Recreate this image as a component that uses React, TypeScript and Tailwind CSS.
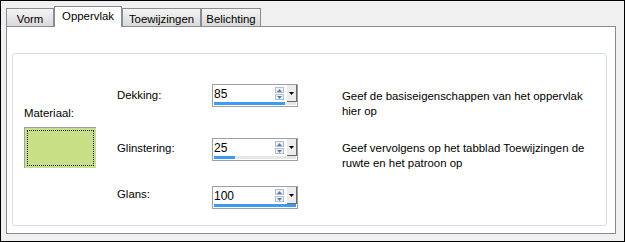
import React from 'react';

const tabs = [
  { label: 'Vorm', width: 'w-[48px]' },
  { label: 'Oppervlak', width: 'w-[68px]', active: true },
  { label: 'Toewijzingen', width: 'w-[79px]' },
  { label: 'Belichting', width: 'w-[60px]' },
];

function SpinArrow({ up }: { up?: boolean }) {
  return (
    <div className="flex h-[6px] w-[9px] items-center justify-center border border-[#b3bfd0] bg-[#eef2f8]">
      <svg width="5" height="3" viewBox="0 0 5 3">
        {up ? (
          <polygon points="0,3 5,3 2.5,0" fill="#5b78ad" />
        ) : (
          <polygon points="0,0 5,0 2.5,3" fill="#5b78ad" />
        )}
      </svg>
    </div>
  );
}

function SpinBox({ value, pct }: { value: string; pct: number }) {
  return (
    <div className="flex h-[23px] w-[86px] flex-col border border-[#a0a0a0] bg-white">
      <div className="flex h-[17px]">
        <span className="flex-1 pl-[1px] pt-[2px] text-[12px] leading-[15px] text-black">{value}</span>
        <div className="flex flex-col gap-[1px] pt-[2px]">
          <SpinArrow up />
          <SpinArrow />
        </div>
        {/* dropdown button */}
        <div className="ml-[3px] flex h-[17px] w-[10px] items-center justify-center border-b border-r border-[#6a6a6a] bg-[#ececec]">
          <svg width="5" height="3" viewBox="0 0 5 3">
            <polygon points="0,0 5,0 2.5,3" fill="#000" />
          </svg>
        </div>
      </div>
      <div className="mx-[1px] mb-[1px] h-[3px] bg-[#e6e6e6]">
        <div className="h-full bg-[#3d9cf2]" style={{ width: `${pct}%` }} />
      </div>
    </div>
  );
}

export default function App() {
  return (
    <div className="h-[242px] w-[625px] border border-black bg-[#f0f0f0] px-[5px] pt-[5px] font-['Liberation_Sans',Arial,sans-serif] text-[11.4px] leading-[15px] text-black">
      {/* Tabs */}
      <div className="relative z-10 -mb-px flex h-[21px] items-end">
        {tabs.map((t) =>
          t.active ? (
            <div
              key={t.label}
              className={`${t.width} flex h-[21px] justify-center border-x border-t border-[#898c95] bg-white pt-[2px]`}
            >
              {t.label}
            </div>
          ) : (
            <div
              key={t.label}
              className={`${t.width} flex h-[19px] justify-center border border-[#898c95] bg-linear-to-b from-[#f4f4f4] to-[#d9d9d9] pt-[3px]`}
            >
              {t.label}
            </div>
          )
        )}
      </div>

      {/* Tab panel */}
      <div className="h-[208px] w-[610px] border border-[#898c95] border-r-[#8a8a96] border-b-[#8a8a96] bg-white pl-[5px] pt-[26px]">
        <div className="flex h-[173px] w-[595px] rounded-[3px] border border-[#d5dfe5]">
          {/* Materiaal */}
          <div className="w-[104px] pl-[11px] pt-[52px]">
            <div>Materiaal:</div>
            <div className="mt-[6px] h-[41px] w-[72px] border-l border-t border-[#a0a0a0] bg-[#c9df86] p-[2px]">
              <div className="h-full w-full border border-dotted border-[#1c1c66]" />
            </div>
          </div>

          {/* Properties */}
          <div className="flex flex-col pt-[30px]">
            <div className="flex h-[54px]">
              <div className="w-[95px] pt-[4px]">Dekking:</div>
              <SpinBox value="85" pct={86} />
              <div className="ml-[44px] whitespace-nowrap pt-[5px]">
                Geef de basiseigenschappen van het oppervlak
                <br />
                hier op
              </div>
            </div>
            <div className="flex h-[48px]">
              <div className="w-[95px] pt-[3px]">Glinstering:</div>
              <SpinBox value="25" pct={25} />
              <div className="ml-[44px] whitespace-nowrap pt-[3px]">
                Geef vervolgens op het tabblad Toewijzingen de
                <br />
                ruwte en het patroon op
              </div>
            </div>
            <div className="flex h-[23px]">
              <div className="w-[95px] pt-[1px]">Glans:</div>
              <SpinBox value="100" pct={100} />
            </div>
          </div>
        </div>
      </div>
    </div>
  );
}
